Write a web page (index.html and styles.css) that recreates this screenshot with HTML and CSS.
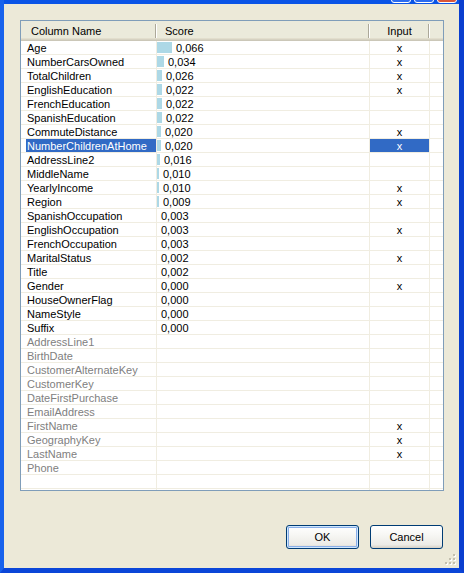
FILE: index.html
```html
<!DOCTYPE html>
<html>
<head>
<meta charset="utf-8">
<link rel="stylesheet" href="styles.css">
</head>
<body>
<div class="window">
  <div class="titlebar">
    <span class="tbtn"></span><span class="tbtn"></span><span class="tbtn close"></span>
  </div>
  <div class="client">
    <div class="grid">
      <div class="head">
        <div class="h hname">Column Name</div>
        <div class="h hscore">Score</div>
        <div class="h hinp">Input</div>
        <div class="h hend"></div>
      </div>
      <div class="row"><div class="c name"><span class="lbl">Age</span></div><div class="c score"><i class="bar" style="width:15px"></i>0,066</div><div class="c inp">x</div><div class="c end"></div></div>
      <div class="row"><div class="c name"><span class="lbl">NumberCarsOwned</span></div><div class="c score"><i class="bar" style="width:7px"></i>0,034</div><div class="c inp">x</div><div class="c end"></div></div>
      <div class="row"><div class="c name"><span class="lbl">TotalChildren</span></div><div class="c score"><i class="bar" style="width:5px"></i>0,026</div><div class="c inp">x</div><div class="c end"></div></div>
      <div class="row"><div class="c name"><span class="lbl">EnglishEducation</span></div><div class="c score"><i class="bar" style="width:5px"></i>0,022</div><div class="c inp">x</div><div class="c end"></div></div>
      <div class="row"><div class="c name"><span class="lbl">FrenchEducation</span></div><div class="c score"><i class="bar" style="width:5px"></i>0,022</div><div class="c inp"></div><div class="c end"></div></div>
      <div class="row"><div class="c name"><span class="lbl">SpanishEducation</span></div><div class="c score"><i class="bar" style="width:5px"></i>0,022</div><div class="c inp"></div><div class="c end"></div></div>
      <div class="row"><div class="c name"><span class="lbl">CommuteDistance</span></div><div class="c score"><i class="bar" style="width:4px"></i>0,020</div><div class="c inp">x</div><div class="c end"></div></div>
      <div class="row sel"><div class="c name"><span class="lbl">NumberChildrenAtHome</span></div><div class="c score"><i class="bar" style="width:4px"></i>0,020</div><div class="c inp">x</div><div class="c end"></div></div>
      <div class="row"><div class="c name"><span class="lbl">AddressLine2</span></div><div class="c score"><i class="bar" style="width:3px"></i>0,016</div><div class="c inp"></div><div class="c end"></div></div>
      <div class="row"><div class="c name"><span class="lbl">MiddleName</span></div><div class="c score"><i class="bar" style="width:2px"></i>0,010</div><div class="c inp"></div><div class="c end"></div></div>
      <div class="row"><div class="c name"><span class="lbl">YearlyIncome</span></div><div class="c score"><i class="bar" style="width:2px"></i>0,010</div><div class="c inp">x</div><div class="c end"></div></div>
      <div class="row"><div class="c name"><span class="lbl">Region</span></div><div class="c score"><i class="bar" style="width:2px"></i>0,009</div><div class="c inp">x</div><div class="c end"></div></div>
      <div class="row"><div class="c name"><span class="lbl">SpanishOccupation</span></div><div class="c score"><i class="bar" style="width:0px"></i>0,003</div><div class="c inp"></div><div class="c end"></div></div>
      <div class="row"><div class="c name"><span class="lbl">EnglishOccupation</span></div><div class="c score"><i class="bar" style="width:0px"></i>0,003</div><div class="c inp">x</div><div class="c end"></div></div>
      <div class="row"><div class="c name"><span class="lbl">FrenchOccupation</span></div><div class="c score"><i class="bar" style="width:0px"></i>0,003</div><div class="c inp"></div><div class="c end"></div></div>
      <div class="row"><div class="c name"><span class="lbl">MaritalStatus</span></div><div class="c score"><i class="bar" style="width:0px"></i>0,002</div><div class="c inp">x</div><div class="c end"></div></div>
      <div class="row"><div class="c name"><span class="lbl">Title</span></div><div class="c score"><i class="bar" style="width:0px"></i>0,002</div><div class="c inp"></div><div class="c end"></div></div>
      <div class="row"><div class="c name"><span class="lbl">Gender</span></div><div class="c score"><i class="bar" style="width:0px"></i>0,000</div><div class="c inp">x</div><div class="c end"></div></div>
      <div class="row"><div class="c name"><span class="lbl">HouseOwnerFlag</span></div><div class="c score"><i class="bar" style="width:0px"></i>0,000</div><div class="c inp"></div><div class="c end"></div></div>
      <div class="row"><div class="c name"><span class="lbl">NameStyle</span></div><div class="c score"><i class="bar" style="width:0px"></i>0,000</div><div class="c inp"></div><div class="c end"></div></div>
      <div class="row"><div class="c name"><span class="lbl">Suffix</span></div><div class="c score"><i class="bar" style="width:0px"></i>0,000</div><div class="c inp"></div><div class="c end"></div></div>
      <div class="row off"><div class="c name"><span class="lbl">AddressLine1</span></div><div class="c score"></div><div class="c inp"></div><div class="c end"></div></div>
      <div class="row off"><div class="c name"><span class="lbl">BirthDate</span></div><div class="c score"></div><div class="c inp"></div><div class="c end"></div></div>
      <div class="row off"><div class="c name"><span class="lbl">CustomerAlternateKey</span></div><div class="c score"></div><div class="c inp"></div><div class="c end"></div></div>
      <div class="row off"><div class="c name"><span class="lbl">CustomerKey</span></div><div class="c score"></div><div class="c inp"></div><div class="c end"></div></div>
      <div class="row off"><div class="c name"><span class="lbl">DateFirstPurchase</span></div><div class="c score"></div><div class="c inp"></div><div class="c end"></div></div>
      <div class="row off"><div class="c name"><span class="lbl">EmailAddress</span></div><div class="c score"></div><div class="c inp"></div><div class="c end"></div></div>
      <div class="row off"><div class="c name"><span class="lbl">FirstName</span></div><div class="c score"></div><div class="c inp">x</div><div class="c end"></div></div>
      <div class="row off"><div class="c name"><span class="lbl">GeographyKey</span></div><div class="c score"></div><div class="c inp">x</div><div class="c end"></div></div>
      <div class="row off"><div class="c name"><span class="lbl">LastName</span></div><div class="c score"></div><div class="c inp">x</div><div class="c end"></div></div>
      <div class="row off"><div class="c name"><span class="lbl">Phone</span></div><div class="c score"></div><div class="c inp"></div><div class="c end"></div></div>
      <div class="row"><div class="c name"></div><div class="c score"></div><div class="c inp"></div><div class="c end"></div></div>
      <div class="row"><div class="c name"></div><div class="c score"></div><div class="c inp"></div><div class="c end"></div></div>
    </div>
    <div class="buttons">
      <button class="btn default">OK</button>
      <button class="btn">Cancel</button>
    </div>
    <svg class="grip" width="12" height="12" viewBox="0 0 12 12">
      <g fill="#fff">
        <rect x="9" y="1" width="2" height="2"/>
        <rect x="5" y="5" width="2" height="2"/><rect x="9" y="5" width="2" height="2"/>
        <rect x="1" y="9" width="2" height="2"/><rect x="5" y="9" width="2" height="2"/><rect x="9" y="9" width="2" height="2"/>
      </g>
      <g fill="#C3BFAE">
        <rect x="8" y="0" width="2" height="2"/>
        <rect x="4" y="4" width="2" height="2"/><rect x="8" y="4" width="2" height="2"/>
        <rect x="0" y="8" width="2" height="2"/><rect x="4" y="8" width="2" height="2"/><rect x="8" y="8" width="2" height="2"/>
      </g>
    </svg>
  </div>
</div>
</body>
</html>
```

FILE: styles.css
```css
* { box-sizing: border-box; }
html, body { margin: 0; padding: 0; }
body {
  width: 464px;
  height: 573px;
  overflow: hidden;
  font-family: "Liberation Sans", Arial, sans-serif;
  font-size: 11px;
  color: #000;
}
.window {
  width: 464px;
  height: 573px;
  display: flex;
  flex-direction: column;
  background: #0A54E6;
  border-left: 4px solid #1862EC;
  border-right: 5px solid #0A3ECF;
  border-bottom: 5px solid #0B46D8;
}
.titlebar {
  height: 4px;
  flex: none;
  display: flex;
  justify-content: flex-end;
  align-items: flex-end;
  gap: 3px;
  padding-right: 2px;
  overflow: hidden;
}
.tbtn {
  flex: none;
  width: 20px;
  height: 21px;
  margin-bottom: 1px;
  border: 1px solid #fff;
  border-radius: 3px;
  background: #2C6CF0;
}
.tbtn.close { background: #D9553A; }
.client {
  position: relative;
  flex: 1;
  background: #ECE9D8;
  padding: 16px 15px 0 16px;
  display: flex;
  flex-direction: column;
}
.grid {
  width: 424px;
  height: 471px;
  flex: none;
  border: 1px solid #7F9DB9;
  background: #fff;
  overflow: hidden;
}
.head, .row {
  display: grid;
  grid-template-columns: 136px 213px 60px 13px;
}
.head { height: 20px; }
.h {
  height: 20px;
  line-height: 20px;
  background-color: #EBEADB;
  box-shadow: inset 0 -1px #CBC7B8, inset 0 -2px #D6D2C2, inset 0 -3px #E2DECD;
  background-image: linear-gradient(#ACA899, #ACA899), linear-gradient(#fff, #fff);
  background-repeat: no-repeat;
  background-size: 1px 14px, 1px 14px;
  background-position: right 1px top 3px, right 0 top 3px;
}
.hname { padding-left: 10px; }
.hscore { padding-left: 8px; }
.hinp { text-align: center; padding-right: 1px; }
.hend { background-image: none; }
.row { height: 14px; }
.c {
  height: 14px;
  line-height: 14px;
  border-bottom: 1px solid #F0EDE1;
  border-right: 1px solid #F0EDE1;
  white-space: nowrap;
  overflow: hidden;
}
.c.end { border-right: none; }
.name { padding-left: 5px; }
.lbl { display: block; height: 13px; padding-left: 1px; }
.off .lbl { color: #808080; }
.score { display: flex; align-items: flex-start; }
.bar {
  display: block;
  height: 11px;
  margin-top: 1px;
  background: #ADD8E6;
  margin-right: 4px;
  flex: none;
}
.inp { text-align: center; }
.sel .lbl, .sel .inp { background: #316AC5; color: #fff; }
.buttons {
  display: flex;
  justify-content: flex-end;
  gap: 11px;
  margin-top: 34px;
  padding-right: 1px;
}
.btn {
  width: 73px;
  height: 24px;
  padding: 0;
  font-family: "Liberation Sans", Arial, sans-serif;
  font-size: 11px;
  color: #000;
  border: 1px solid #003C74;
  border-radius: 3px;
  background: linear-gradient(#FFFFFF 0%, #F7F7F4 40%, #ECEBE6 85%, #D6D0C5 100%);
}
.btn.default {
  box-shadow: inset 0 0 0 1px #CEE7FF, inset 0 0 0 2px #8AAEE7;
}
.grip {
  position: absolute;
  right: 2px;
  bottom: 2px;
}
```
